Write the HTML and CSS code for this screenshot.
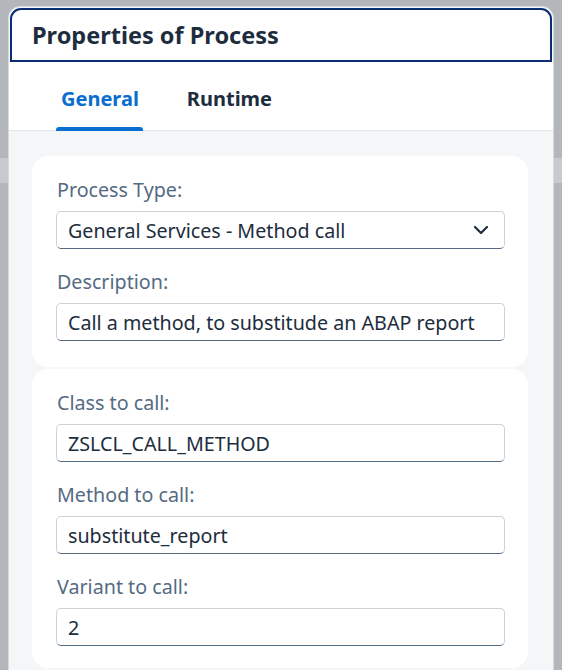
FILE: index.html
```html
<!DOCTYPE html>
<html>
<head>
<meta charset="utf-8">
<link rel="stylesheet" href="styles.css">
</head>
<body>
<div class="dialog">
  <div class="header"><h1 class="title">Properties of Process</h1></div>
  <div class="tabs">
    <div class="tab active">General</div>
    <div class="tab">Runtime</div>
  </div>
  <div class="content">
    <div class="card first">
      <label class="label">Process Type:</label>
      <div class="field select">
        <span class="value">General Services - Method call</span>
        <svg class="chev" width="16" height="10" viewBox="0 0 16 10"><path d="M2 2 L8 8 L14 2" fill="none" stroke="#1d2d3e" stroke-width="2.2" stroke-linecap="round" stroke-linejoin="round"/></svg>
      </div>
      <label class="label">Description:</label>
      <div class="field"><span class="value">Call a method, to substitude an ABAP report</span></div>
    </div>
    <div class="card">
      <label class="label">Class to call:</label>
      <div class="field"><span class="value">ZSLCL_CALL_METHOD</span></div>
      <label class="label">Method to call:</label>
      <div class="field"><span class="value">substitute_report</span></div>
      <label class="label">Variant to call:</label>
      <div class="field"><span class="value">2</span></div>
    </div>
  </div>
</div>
</body>
</html>
```
FILE: styles.css
```css
html, body { margin: 0; padding: 0; }
body {
  width: 562px;
  height: 670px;
  overflow: hidden;
  background: linear-gradient(to bottom, #b3b6ba 0, #b3b6ba 158px, #c6c9cd 158px, #c6c9cd 183px, #b3b6ba 183px);
  font-family: "Noto Sans", "Open Sans", sans-serif;
  padding: 6px 8px 0 8px;
  box-sizing: border-box;
}
.dialog {
  background: #f5f6f7;
  border: 1px solid #d9dadc;
  border-radius: 12px 12px 0 0;
  height: 700px;
  overflow: hidden;
}
.header {
  background: #fff;
  border: 2.5px solid #0b2d74;
  border-radius: 11px 11px 0 0;
  margin: 1px 1px 0 1px;
  height: 54px;
  box-sizing: border-box;
  display: flex;
  align-items: center;
  padding-left: 20px;
}
.title {
  margin: 0;
  font-size: 23.5px;
  font-weight: 700;
  color: #1d2d3e;
}
.tabs {
  background: #fff;
  border-bottom: 1px solid #e2e4e6;
  height: 69px;
  display: flex;
  padding-left: 47px;
  box-sizing: border-box;
}
.tab {
  font-size: 20px;
  font-weight: 700;
  color: #1d2d3e;
  padding: 23px 4px 0 5px;
  margin-right: 39px;
  position: relative;
}
.tab.active { color: #0a6ed1; }
.tab.active::after {
  content: "";
  position: absolute;
  left: 0;
  right: 0;
  bottom: -1px;
  height: 4px;
  background: #0a6ed1;
  border-radius: 3px 3px 0 0;
}
.content {
  padding: 25px 25px 0 23px;
  display: flex;
  flex-direction: column;
  gap: 2px;
}
.card {
  background: #fff;
  border-radius: 16px;
  padding: 22px 23px 22px 24px;
  display: flex;
  flex-direction: column;
}
.card.first { padding-bottom: 26px; }
.label {
  display: block;
  font-size: 19.7px;
  line-height: 24px;
  color: #556b82;
  margin: 21px 0 9px 1px;
}
.label:first-child { margin-top: 0; }
.field {
  height: 38px;
  box-sizing: border-box;
  border: 1px solid #cdd2d7;
  border-bottom-color: #556b82;
  border-radius: 5px;
  display: flex;
  align-items: center;
  padding: 0 11px;
}
.value {
  font-size: 19.7px;
  color: #1d2d3e;
  flex: 1;
  white-space: nowrap;
}
.chev { margin-right: 4px; }
```
